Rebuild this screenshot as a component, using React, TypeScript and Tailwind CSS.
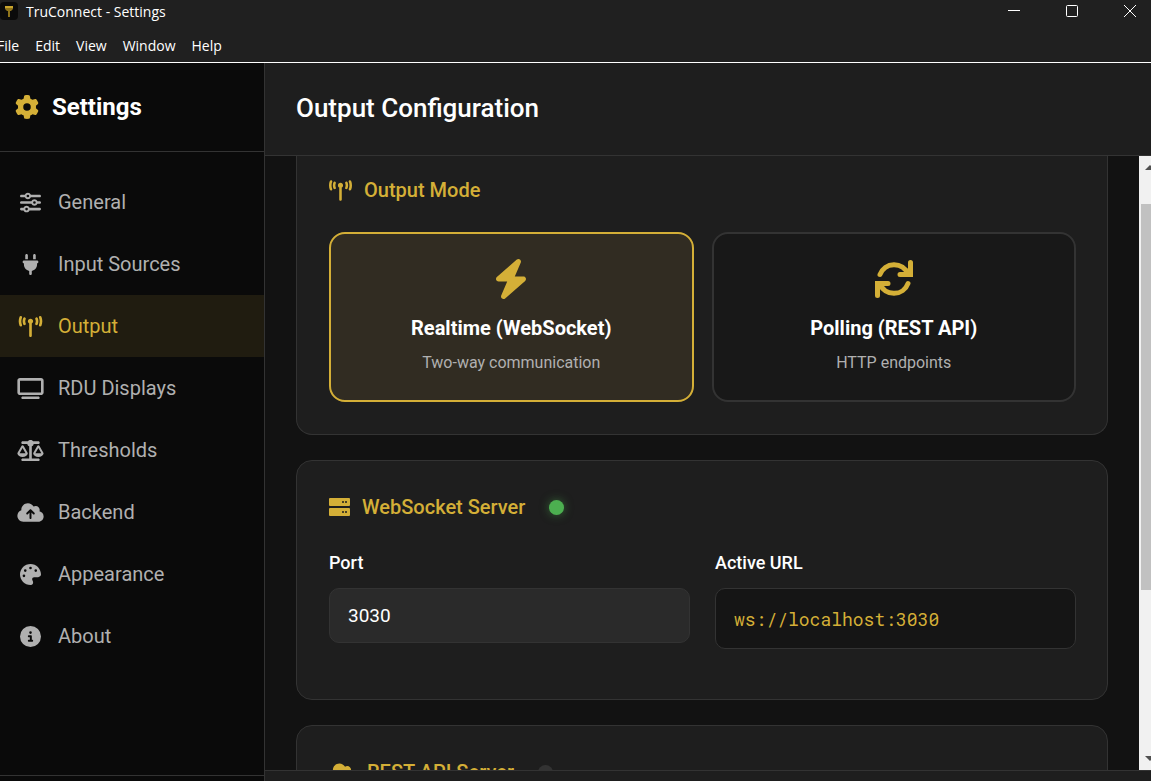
import { useState } from "react";
import type { ReactNode } from "react";
import type { IconType } from "react-icons";
import {
  FaBolt,
  FaCircleInfo,
  FaCloud,
  FaCloudArrowUp,
  FaGear,
  FaPalette,
  FaPlug,
  FaScaleBalanced,
  FaSliders,
  FaTowerBroadcast,
  FaTv,
} from "react-icons/fa6";

const menus = ["File", "Edit", "View", "Window", "Help"];

const sections: { label: string; icon: IconType }[] = [
  { label: "General", icon: FaSliders },
  { label: "Input Sources", icon: FaPlug },
  { label: "Output", icon: FaTowerBroadcast },
  { label: "RDU Displays", icon: FaTv },
  { label: "Thresholds", icon: FaScaleBalanced },
  { label: "Backend", icon: FaCloudArrowUp },
  { label: "Appearance", icon: FaPalette },
  { label: "About", icon: FaCircleInfo },
];

// Two chasing arrows, the second one is the first turned by half a circle
function RotateIcon() {
  return (
    <svg width="40" height="40" viewBox="0 0 40 40" fill="none" stroke="currentColor" strokeWidth="5" strokeLinecap="round" aria-hidden>
      <path d="M6 15.5A15 15 0 0 1 34 15" />
      <path d="M36.5 3.5v12H26" />
      <path d="M30 13l6-5h3v10h-9z" fill="currentColor" stroke="none" />
      <g transform="rotate(180 20 20)">
        <path d="M6 15.5A15 15 0 0 1 34 15" />
        <path d="M36.5 3.5v12H26" />
        <path d="M30 13l6-5h3v10h-9z" fill="currentColor" stroke="none" />
      </g>
    </svg>
  );
}

function ServerIcon() {
  return (
    <svg width="21" height="21" viewBox="0 0 21 21" fill="currentColor" aria-hidden>
      <rect x="0" y="1" width="21" height="8" rx="1" />
      <rect x="0" y="11" width="21" height="8" rx="1" />
      <g fill="#1e1e1e">
        <rect x="13" y="4" width="2" height="2" rx="1" />
        <rect x="16" y="4" width="2" height="2" rx="1" />
        <rect x="13" y="14" width="2" height="2" rx="1" />
        <rect x="16" y="14" width="2" height="2" rx="1" />
      </g>
    </svg>
  );
}

const modes: { id: string; title: string; hint: string; icon: ReactNode }[] = [
  { id: "realtime", title: "Realtime (WebSocket)", hint: "Two-way communication", icon: <FaBolt className="size-10" /> },
  { id: "polling", title: "Polling (REST API)", hint: "HTTP endpoints", icon: <RotateIcon /> },
];

function WindowBar() {
  return (
    <header className="shrink-0 border-b border-white bg-[#202020] font-['Open_Sans','Noto_Sans',sans-serif] text-sm text-white">
      <div className="flex h-6 items-start justify-between">
        <div className="flex h-6 items-center gap-2">
          <svg width="18" height="20" viewBox="0 0 18 20" aria-hidden>
            <rect x="0" y="0" width="18" height="18" rx="4" fill="#0b0b0b" />
            <path d="M5 4h8v3l-2 2h-1v6H8V9H7L5 7z" fill="#8f741b" />
            <path d="M5 4h8v2H5z" fill="#c9a52e" />
          </svg>
          <span>TruConnect - Settings</span>
        </div>
        <div className="flex items-center gap-[38px] pr-[11px]">
          <button type="button" aria-label="Minimize" className="flex h-[22px] w-5 items-center justify-center">
            <svg width="12" height="12" viewBox="0 0 12 12" aria-hidden>
              <path d="M0 5.5h12" stroke="#fff" />
            </svg>
          </button>
          <button type="button" aria-label="Maximize" className="flex h-[22px] w-5 items-center justify-center">
            <svg width="12" height="12" viewBox="0 0 12 12" fill="none" aria-hidden>
              <rect x="0.5" y="0.5" width="11" height="11" rx="1" stroke="#fff" />
            </svg>
          </button>
          <button type="button" aria-label="Close" className="flex h-[22px] w-5 items-center justify-center">
            <svg width="12" height="12" viewBox="0 0 12 12" aria-hidden>
              <path d="M0 0l12 12M12 0L0 12" stroke="#fff" />
            </svg>
          </button>
        </div>
      </div>
      <nav className="-ml-[3px] flex h-[38px] items-center gap-4 pt-[5px]">
        {menus.map((menu) => (
          <button key={menu} type="button">
            {menu}
          </button>
        ))}
      </nav>
    </header>
  );
}

function Sidebar() {
  return (
    <aside className="flex w-[265px] shrink-0 flex-col border-r border-[#333] bg-[#0a0a0a]">
      <div className="flex h-[89px] items-center gap-[13px] border-b border-[#333] px-[15px] text-2xl font-bold">
        <FaGear className="text-[#d4af37]" />
        <h1>Settings</h1>
      </div>
      <nav className="flex flex-1 flex-col pt-[19px]">
        {sections.map(({ label, icon: Icon }) => (
          <a
            key={label}
            href="#"
            className={
              label === "Output"
                ? "flex h-[62px] items-center gap-[14px] bg-[#201c10] px-[17px] text-xl text-[#d4af37]"
                : "flex h-[62px] items-center gap-[14px] px-[17px] text-xl text-[#b0b0b0]"
            }
          >
            <Icon className="h-[21px] w-[27px]" />
            {label}
          </a>
        ))}
      </nav>
      <div className="h-[6px] border-t border-[#333]" />
    </aside>
  );
}

function CardTitle({ icon, children }: { icon: ReactNode; children: string }) {
  return (
    <h3 className="flex items-center gap-3 text-xl leading-[29px] font-medium text-[#d4af37]">
      {icon}
      {children}
    </h3>
  );
}

function OutputMode() {
  const [mode, setMode] = useState("realtime");

  return (
    <section className="shrink-0 rounded-b-2xl border border-t-0 border-[#333] bg-[#1e1e1e] pt-5 pr-[31px] pb-8 pl-8">
      <CardTitle icon={<FaTowerBroadcast className="h-[21px] w-[23px]" />}>Output Mode</CardTitle>
      <div className="mt-[27px] grid grid-cols-2 gap-[18px]">
        {modes.map(({ id, title, hint, icon }) => (
          <button
            key={id}
            type="button"
            aria-pressed={mode === id}
            onClick={() => setMode(id)}
            className={
              mode === id
                ? "flex h-[170px] flex-col items-center rounded-2xl border-2 border-[#d4af37] bg-[#312c22] pt-[25px]"
                : "flex h-[170px] flex-col items-center rounded-2xl border-2 border-[#333] bg-[#181818] pt-[25px]"
            }
          >
            <span className="text-[#d4af37]">{icon}</span>
            <span className="mt-[15px] text-xl font-bold">{title}</span>
            <span className="mt-[9px] text-base text-[#b0b0b0]">{hint}</span>
          </button>
        ))}
      </div>
    </section>
  );
}

function WebSocketServer() {
  return (
    <section className="h-60 shrink-0 rounded-2xl border border-[#333] bg-[#1e1e1e] pt-8 pr-[31px] pl-8">
      <div className="flex items-center gap-6">
        <CardTitle icon={<ServerIcon />}>WebSocket Server</CardTitle>
        <span className="size-[15px] rounded-full bg-[#4caf50] shadow-[0_0_10px_#4caf5080]" />
      </div>
      <div className="mt-[27px] grid grid-cols-2 items-start gap-[25px]">
        <div className="flex flex-col gap-[11px]">
          <label htmlFor="ws-port" className="text-lg font-medium">
            Port
          </label>
          <input
            id="ws-port"
            defaultValue="3030"
            className="h-[55px] w-full rounded-[10px] border border-[#333] bg-[#2a2a2a] px-[18px] text-[19px] outline-none"
          />
        </div>
        <div className="flex flex-col gap-[11px]">
          <span className="text-lg font-medium">Active URL</span>
          <code className="flex h-[61px] items-center rounded-[10px] border border-[#333] bg-[#151515] px-[18px] font-['Roboto_Mono','DejaVu_Sans_Mono',monospace] text-lg text-[#d4af37]">
            ws://localhost:3030
          </code>
        </div>
      </div>
    </section>
  );
}

function RestServer() {
  return (
    <section className="shrink-0 rounded-2xl border border-[#333] bg-[#1e1e1e] px-8 py-8">
      <div className="flex items-center gap-6">
        <CardTitle icon={<FaCloud className="h-[21px] w-[26px]" />}>REST API Server</CardTitle>
        <span className="size-[15px] rounded-full bg-[#333]" />
      </div>
    </section>
  );
}

function Scrollbar() {
  return (
    <div className="flex w-3 shrink-0 flex-col overflow-hidden bg-[#f1f1f1]" aria-hidden>
      <svg width="12" height="48" viewBox="0 0 12 48" className="shrink-0">
        <path d="M6 14l5-5 5 5z" fill="#505050" />
      </svg>
      <div className="ml-0.5 flex-[386] bg-[#c1c1c1]" />
      <div className="flex flex-[180] items-end">
        <svg width="12" height="17" viewBox="0 0 12 17">
          <path d="M6 3l5 5 5-5z" fill="#505050" />
        </svg>
      </div>
    </div>
  );
}

export default function App() {
  return (
    <div className="flex h-screen flex-col overflow-hidden bg-[#121212] font-[Roboto,sans-serif] text-white">
      <WindowBar />
      <div className="flex min-h-0 flex-1">
        <Sidebar />
        <main className="flex min-w-0 flex-1 flex-col">
          <div className="flex h-[93px] shrink-0 items-center border-b border-[#333] bg-[#1e1e1e] px-[31px] pb-0.5">
            <h2 className="text-[26px] font-medium">Output Configuration</h2>
          </div>
          <div className="flex min-h-0 flex-1">
            <div className="flex min-w-0 flex-1 flex-col gap-[25px] overflow-hidden px-[31px]">
              <OutputMode />
              <WebSocketServer />
              <RestServer />
            </div>
            <Scrollbar />
          </div>
          <div className="h-[11px] shrink-0 border-t border-[#333] bg-[#1e1e1e]" />
        </main>
      </div>
    </div>
  );
}
